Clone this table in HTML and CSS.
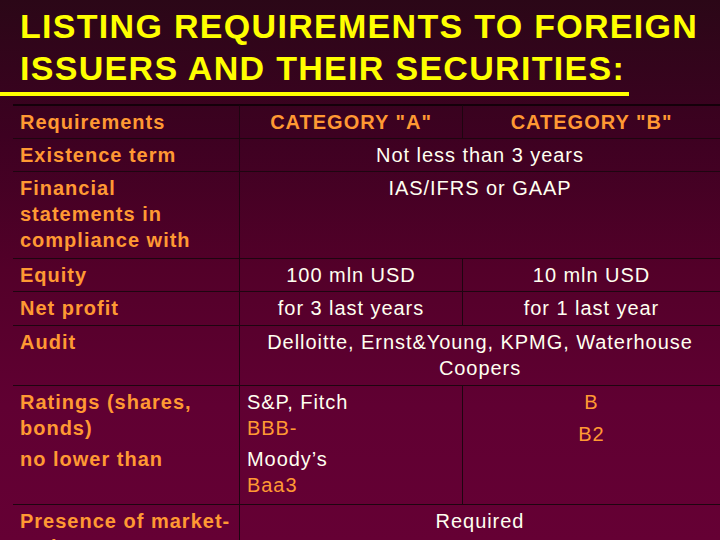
FILE: index.html
```html
<!DOCTYPE html>
<html lang="en">
<head>
<meta charset="utf-8">
<title>Listing requirements</title>
<link rel="stylesheet" href="styles.css">
</head>
<body>
<div class="slide">
  <h1 class="title">LISTING REQUIREMENTS TO FOREIGN ISSUERS AND THEIR SECURITIES:</h1>
  <div class="rule"></div>
  <div class="table">
    <div class="cell label head">Requirements</div>
    <div class="cell head center vl">CATEGORY "A"</div>
    <div class="cell head center vl">CATEGORY "B"</div>

    <div class="cell label">Existence term</div>
    <div class="cell span center vl">Not less than 3 years</div>

    <div class="cell label">Financial statements in compliance with</div>
    <div class="cell span center vl">IAS/IFRS or GAAP</div>

    <div class="cell label">Equity</div>
    <div class="cell center vl">100 mln USD</div>
    <div class="cell center vl">10 mln USD</div>

    <div class="cell label">Net profit</div>
    <div class="cell center vl">for 3 last years</div>
    <div class="cell center vl">for 1 last year</div>

    <div class="cell label">Audit</div>
    <div class="cell span center vl">Delloitte, Ernst&amp;Young, KPMG, Waterhouse Coopers</div>

    <div class="cell label">
      <p class="para">Ratings (shares, bonds)</p>
      <p class="para gap">no lower than</p>
    </div>
    <div class="cell vl left">
      <p class="para">S&amp;P, Fitch<br><span class="orange">BBB-</span></p>
      <p class="para gap">Moody’s<br><span class="orange">Baa3</span></p>
    </div>
    <div class="cell center vl">
      <p class="para orange">B</p>
      <p class="para orange gap2">B2</p>
    </div>

    <div class="cell label">Presence of market-makers</div>
    <div class="cell span center vl">Required</div>
  </div>
</div>
</body>
</html>
```
FILE: styles.css
```css
html, body {
  margin: 0;
  padding: 0;
}
body {
  width: 720px;
  height: 540px;
  overflow: hidden;
  background: #3a0020;
}
.slide {
  width: 720px;
  height: 540px;
  overflow: hidden;
  background: linear-gradient(to bottom, #2b0717 0%, #3d0121 25%, #530029 50%, #600032 75%, #650034 100%);
  font-family: Arial, "Liberation Sans", Helvetica, sans-serif;
}
.title {
  margin: 0;
  padding: 5px 0 0 20px;
  font-size: 34px;
  line-height: 42px;
  font-weight: bold;
  color: #ffff00;
  letter-spacing: 1.3px;
  width: 690px;
  font-family: Arial, "Liberation Sans", Helvetica, sans-serif;
}
.rule {
  margin-top: 3px;
  width: 629px;
  height: 4px;
  background: #ffff00;
}
.table {
  margin: 8px 0 0 13px;
  display: grid;
  grid-template-columns: 226px 223px 258px;
  grid-template-rows: 33px 33px 87px 33px 34px 60px 119px 60px;
  border-top: 1px solid #14000a;
  font-size: 20px;
  line-height: 26px;
  letter-spacing: 0.95px;
  color: #fffff0;
}
.cell {
  box-sizing: border-box;
  border-top: 1px solid #1e0510;
  padding: 3px 6px 0 7px;
}
.table > .cell:nth-child(-n+3) {
  border-top: 1px solid #14000a;
}
.label {
  font-weight: bold;
  color: #ff9933;
  letter-spacing: 1px;
}
.head {
  font-weight: bold;
  color: #ff9933;
  letter-spacing: 1px;
}
.center {
  text-align: center;
  padding-left: 0;
  padding-right: 0;
}
.left {
  text-align: left;
}
.span {
  grid-column: 2 / 4;
}
.vl {
  border-left: 1px solid #1e0510;
}
.orange {
  color: #ff9933;
}
.para {
  margin: 0;
}
.gap {
  margin-top: 5px;
}
.gap2 {
  margin-top: 6px;
}
```
